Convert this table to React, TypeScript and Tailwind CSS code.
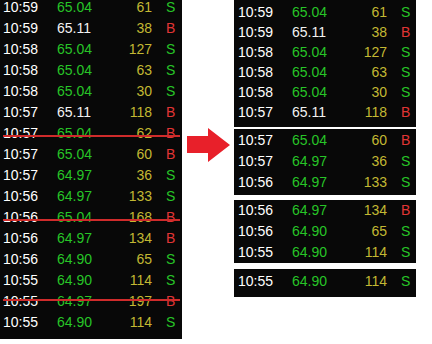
import React from "react";

type Trade = { t: string; p: string; s: string; side: "S" | "B"; white?: boolean; struck?: number };

const left: Trade[] = [
  { t: "10:59", p: "65.04", s: "61", side: "S" },
  { t: "10:59", p: "65.11", s: "38", side: "B", white: true },
  { t: "10:58", p: "65.04", s: "127", side: "S" },
  { t: "10:58", p: "65.04", s: "63", side: "S" },
  { t: "10:58", p: "65.04", s: "30", side: "S" },
  { t: "10:57", p: "65.11", s: "118", side: "B", white: true },
  { t: "10:57", p: "65.04", s: "62", side: "B", struck: 12 },
  { t: "10:57", p: "65.04", s: "60", side: "B" },
  { t: "10:57", p: "64.97", s: "36", side: "S" },
  { t: "10:56", p: "64.97", s: "133", side: "S" },
  { t: "10:56", p: "65.04", s: "168", side: "B", struck: 12 },
  { t: "10:56", p: "64.97", s: "134", side: "B" },
  { t: "10:56", p: "64.90", s: "65", side: "S" },
  { t: "10:55", p: "64.90", s: "114", side: "S" },
  { t: "10:55", p: "64.97", s: "197", side: "B", struck: 8 },
  { t: "10:55", p: "64.90", s: "114", side: "S" },
];

const g1 = left.slice(0, 6);
const g2 = [left[7], left[8], left[9]];
const g3 = [left[11], left[12], left[13]];
const g4 = [left[15]];

function Row({ d, h }: { d: Trade; h: string }) {
  return (
    <div className={`relative flex whitespace-nowrap ${h}`}>
      <span className="w-[54px] text-white">{d.t}</span>
      <span className={`w-[53px] ${d.white ? "text-[#f2f2f2]" : "text-[#27c427]"}`}>{d.p}</span>
      <span className="w-[42px] text-right text-[#c3b833]">{d.s}</span>
      <span className={`ml-[14px] ${d.side === "B" ? "text-[#e03535]" : "text-[#27c427]"}`}>{d.side}</span>
      {d.struck !== undefined && (
        <div
          className="absolute left-0 w-[177px] h-[2px] bg-[#cf2b2b]"
          style={{ top: d.struck }}
        />
      )}
    </div>
  );
}

export default function App() {
  return (
    <div
      className="w-[432px] h-[344px] bg-white flex items-start overflow-hidden text-[14px]"
      style={{ fontFamily: '"Liberation Sans", Arial, sans-serif' }}
    >
      <div className="w-[182px] h-[339px] bg-[#080808] overflow-hidden">
        <div className="-mt-[3px] pl-[3px]">
          {left.map((d, i) => (
            <Row key={i} d={d} h="leading-[21px]" />
          ))}
        </div>
      </div>

      <div className="w-[52px] pt-[128px] pl-[5px]">
        <svg width="44" height="35" viewBox="0 0 44 35">
          <polygon points="0,8 21,8 21,0 43,17 21,34 21,25 0,25" fill="#e8202a" />
        </svg>
      </div>

      <div className="w-[182px] flex flex-col">
        <div className="h-[127px] bg-[#080808] pt-[2px] pl-[4px]">
          {g1.map((d, i) => (
            <Row key={i} d={d} h="leading-[20px]" />
          ))}
        </div>
        <div className="mt-[2px] bg-[#080808] pt-[1px] pb-[2px] pl-[4px]">
          {g2.map((d, i) => (
            <Row key={i} d={d} h="leading-[21px]" />
          ))}
        </div>
        <div className="mt-[5px] bg-[#080808] pl-[4px]">
          {g3.map((d, i) => (
            <Row key={i} d={d} h="leading-[21px]" />
          ))}
        </div>
        <div className="mt-[6px] bg-[#080808] pt-[2px] pb-[5px] pl-[4px]">
          {g4.map((d, i) => (
            <Row key={i} d={d} h="leading-[21px]" />
          ))}
        </div>
      </div>
    </div>
  );
}
